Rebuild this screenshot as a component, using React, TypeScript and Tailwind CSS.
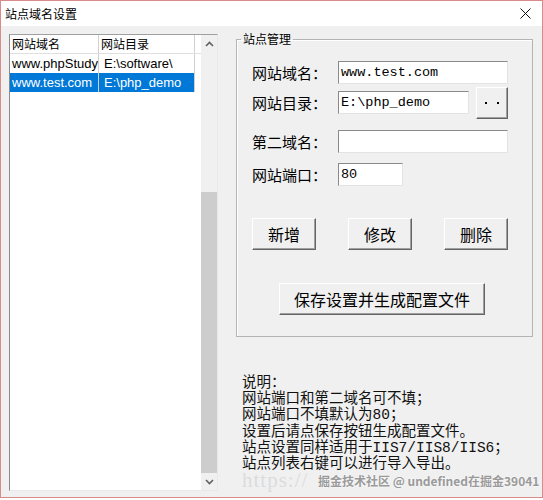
import React from 'react';

type Site = { domain: string; dir: string; selected?: boolean };

const sites: Site[] = [
    { domain: 'www.phpStudy', dir: 'E:\\software\\' },
    { domain: 'www.test.com', dir: 'E:\\php_demo', selected: true },
];

const notes = [
    '说明：',
    '网站端口和第二域名可不填；',
    '网站端口不填默认为80；',
    '设置后请点保存按钮生成配置文件。',
    '站点设置同样适用于IIS7/IIS8/IIS6；',
    '站点列表右键可以进行导入导出。',
];

// sunken edit box, classic win32 look
const editCls =
    "h-[23px] bg-white border border-[#8a8a8a] border-r-[#e3e3e3] border-b-[#e3e3e3] pl-[2px] outline-none text-black text-[13.5px] font-['Liberation_Mono','Noto_Sans_CJK_SC',monospace]";

// raised push button
const btnCls =
    "h-[32px] bg-[#f0f0f0] border border-t-white border-l-white border-r-[#646464] border-b-[#646464] shadow-[inset_-1px_-1px_0_#a0a0a0] text-[16px] leading-none text-black font-['Noto_Sans_CJK_SC',sans-serif] flex items-center justify-center";

function Field({ label, value, width, extra }: { label: string; value: string; width: string; extra?: React.ReactNode }) {
    return (
        <div className="flex items-center h-[23px]">
            <span className="w-[86px] text-[15px] leading-[23px] text-black font-['Noto_Sans_CJK_SC',sans-serif]">{label}</span>
            <input readOnly value={value} className={`${editCls} ${width}`} />
            {extra}
        </div>
    );
}

function Chevron({ up }: { up?: boolean }) {
    return (
        <svg width="9" height="6" viewBox="0 0 9 6">
            <polyline
                points={up ? '1,5 4.5,1.5 8,5' : '1,1 4.5,4.5 8,1'}
                fill="none"
                stroke="#606060"
                strokeWidth="1.6"
            />
        </svg>
    );
}

function SiteList() {
    return (
        <div className="mt-[2px] w-[209px] h-[457px] flex bg-white border border-l-[#8a8a8a] border-t-[#a0a0a0] border-r-[#e8e8e8] border-b-[#e8e8e8]">
            <div className="flex-1 overflow-hidden">
                <div className="flex h-[19px] border-b border-[#e0e0e0] text-[12px] leading-[18px] text-black font-['Noto_Sans_CJK_SC',sans-serif]">
                    <div className="w-[89px] pl-[2px] border-r border-[#d0d0d0]">网站域名</div>
                    <div className="w-[96px] pl-[2px] border-r border-[#d0d0d0]">网站目录</div>
                </div>
                {sites.map(s => (
                    <div
                        key={s.domain}
                        className={`flex w-[185px] h-[19px] text-[13px] leading-[19px] font-['Liberation_Sans',sans-serif] ${s.selected ? 'bg-[#0078d7] text-white' : 'text-black'}`}
                    >
                        <div className="w-[89px] pl-[2px] border-r border-[#d0d0d0] overflow-hidden whitespace-nowrap">{s.domain}</div>
                        <div className="w-[96px] pl-[5px] border-r border-[#d0d0d0] overflow-hidden whitespace-nowrap">{s.dir}</div>
                    </div>
                ))}
            </div>
            {/* vertical scrollbar */}
            <div className="w-[16px] flex flex-col bg-[#f0f0f0]">
                <div className="h-[17px] flex items-center justify-center">
                    <Chevron up />
                </div>
                <div className="h-[140px]" />
                <div className="flex-1 bg-[#cdcdcd]" />
                <div className="h-[17px] flex items-center justify-center">
                    <Chevron />
                </div>
            </div>
        </div>
    );
}

function SiteForm() {
    return (
        <fieldset className="w-[297px] border border-[#b4b4b4] shadow-[inset_1px_1px_0_#fff]">
            <legend className="ml-[4px] px-[2px] text-[12px] leading-[14px] text-black font-['Noto_Sans_CJK_SC',sans-serif]">站点管理</legend>
            <div className="pl-[15px] pt-[15px] pb-[21px]">
                <Field label="网站域名：" value="www.test.com" width="w-[170px]" />
                <div className="mt-[7px]">
                    <Field
                        label="网站目录："
                        value="E:\php_demo"
                        width="w-[131px]"
                        extra={
                            <button className={`${btnCls} ml-[7px] w-[32px] h-[23px] gap-[10px]`}>
                                <span className="w-[2px] h-[2px] bg-black" />
                                <span className="w-[2px] h-[2px] bg-black" />
                            </button>
                        }
                    />
                </div>
                <div className="mt-[16px]">
                    <Field label="第二域名：" value="" width="w-[170px]" />
                </div>
                <div className="mt-[10px]">
                    <Field label="网站端口：" value="80" width="w-[65px]" />
                </div>
                <div className="mt-[32px] flex gap-[32px]">
                    <button className={`${btnCls} w-[64px]`}>新增</button>
                    <button className={`${btnCls} w-[64px]`}>修改</button>
                    <button className={`${btnCls} w-[64px]`}>删除</button>
                </div>
                <button className={`${btnCls} mt-[33px] ml-[27px] w-[206px]`}>保存设置并生成配置文件</button>
            </div>
        </fieldset>
    );
}

export default function App() {
    return (
        <div className="w-[543px] h-[500px] bg-white">
            <div className="relative w-[543px] h-[498px] flex flex-col border border-[#d98a8a]">
                {/* caption */}
                <div className="h-[25px] bg-white flex items-center justify-between pl-[4px] pr-[11px]">
                    <span className="text-[12px] leading-none text-black font-['Noto_Sans_CJK_SC',sans-serif]">站点域名设置</span>
                    <svg width="11" height="11" viewBox="0 0 11 11">
                        <path d="M0.5 0.5 L10.5 10.5 M10.5 0.5 L0.5 10.5" stroke="#111" strokeWidth="1" />
                    </svg>
                </div>

                <div className="flex-1 bg-[#f0f0f0] flex items-start pl-[8px] pt-[6px]">
                    <SiteList />
                    <div className="ml-[18px] flex flex-col">
                        <SiteForm />
                        <div className="mt-[38px] ml-[6px] text-[14.5px] leading-[16.2px] text-[#111] font-['Liberation_Mono','Noto_Sans_CJK_SC',monospace]">
                            {notes.map(n => (
                                <div key={n}>{n}</div>
                            ))}
                        </div>
                    </div>
                </div>

                {/* watermarks */}
                <div className="absolute left-[241px] top-[469px] text-[21px] leading-none text-[#dcdcdc] tracking-[1px] font-['Liberation_Serif',serif] whitespace-nowrap">
                    https://
                </div>
                <div className="absolute left-[317px] top-[473px] text-[12px] leading-[14px] font-bold text-[#9a9a9a] [text-shadow:0_0_2px_#fff] font-['Noto_Sans_CJK_SC',sans-serif] whitespace-nowrap">
                    掘金技术社区 @ undefined在掘金39041
                </div>
            </div>
        </div>
    );
}
